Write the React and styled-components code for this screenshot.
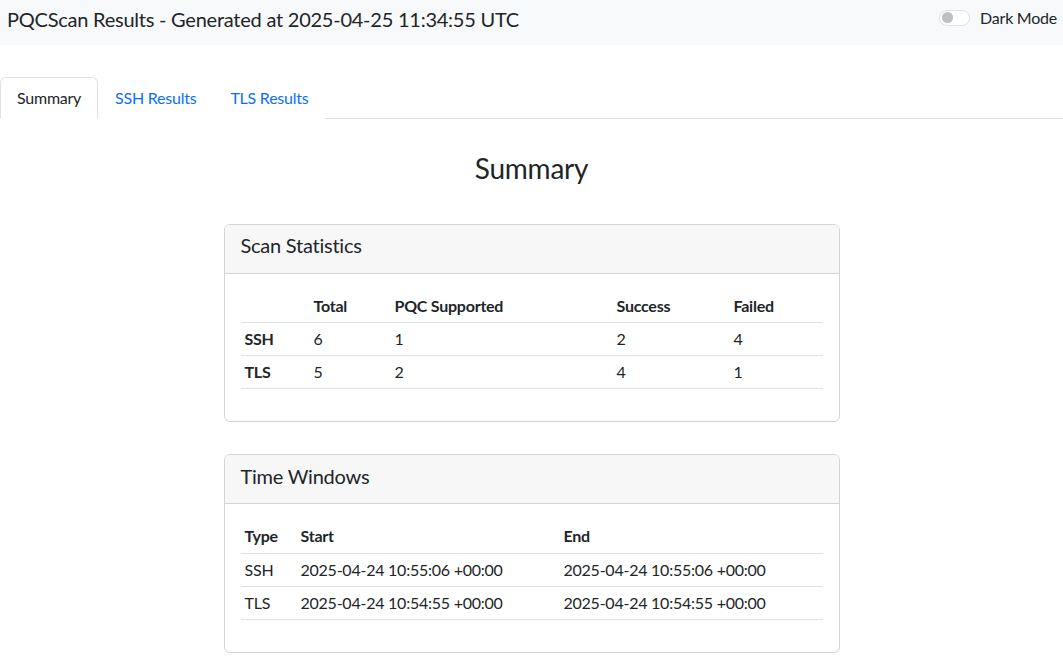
import { useState } from 'react';
import styled, { createGlobalStyle } from 'styled-components';

const GlobalStyle = createGlobalStyle`
  * { box-sizing: border-box; }
  body {
    margin: 0;
    font-family: Lato, "Open Sans", sans-serif;
    font-size: 16px;
    line-height: 1.5;
    letter-spacing: -0.015em;
    color: #212529;
    background: #fff;
  }
`;

const TopBar = styled.header`
  height: 45px;
  background: #f8f9fa;
  display: flex;
  align-items: center;
  justify-content: space-between;
  padding: 0 6px 0 7px;
`;

const Title = styled.h1`
  margin: 0;
  font-size: 20px;
  font-weight: 400;
  line-height: 1.2;
  margin-top: -8px;
`;

const ThemeToggle = styled.label`
  display: flex;
  align-items: center;
  gap: 10px;
  margin-top: -10px;
  cursor: pointer;
`;

const Switch = styled.span`
  width: 31px;
  height: 16px;
  border-radius: 8px;
  border: 1px solid #dee2e6;
  background: ${p => (p.on ? '#0d6efd' : '#fff')};
  display: flex;
  align-items: center;
  justify-content: ${p => (p.on ? 'flex-end' : 'flex-start')};
  padding: 0 2px;

  &::after {
    content: '';
    width: 11px;
    height: 11px;
    border-radius: 50%;
    background: ${p => (p.on ? '#fff' : '#bfbfbf')};
  }
`;

const Tabs = styled.nav`
  display: flex;
  margin-top: 32px;
  border-bottom: 1px solid #dee2e6;
`;

const Tab = styled.button`
  font: inherit;
  letter-spacing: inherit;
  background: #fff;
  padding: 8px 16px;
  margin-bottom: -1px;
  border: 1px solid ${p => (p.active ? '#dee2e6' : 'transparent')};
  border-bottom-color: ${p => (p.active ? '#fff' : 'transparent')};
  border-radius: 6px 6px 0 0;
  color: ${p => (p.active ? '#212529' : '#0d6efd')};
  cursor: pointer;
  line-height: 24px;
`;

const Content = styled.main`
  display: flex;
  flex-direction: column;
  align-items: center;
  padding-top: 33px;
`;

const Heading = styled.h2`
  margin: 0 0 38px;
  font-size: 28px;
  font-weight: 400;
  line-height: 1.2;
`;

const Card = styled.section`
  width: 616px;
  border: 1px solid #d4d4d4;
  border-radius: 6px;
  margin-bottom: 32px;
  overflow: hidden;
`;

const CardHeader = styled.div`
  background: #f7f7f7;
  border-bottom: 1px solid #d4d4d4;
  padding: 8px 16px;
  height: 49px;
  display: flex;
  align-items: center;
`;

const CardTitle = styled.h3`
  margin: 0;
  font-size: 20px;
  font-weight: 400;
  line-height: 1.2;
  margin-top: -7px;
`;

const CardBody = styled.div`
  padding: 16px 16px 32px;
`;

const Table = styled.table`
  width: 100%;
  border-collapse: collapse;
  table-layout: fixed;
`;

const Cell = styled.td`
  padding: 4px;
  height: 33px;
  border-bottom: 1px solid #dee2e6;
  font-weight: ${p => (p.bold ? 700 : 400)};
  text-align: left;
  vertical-align: middle;
`;

const HeadCell = styled(Cell).attrs({ as: 'th' })`
  font-weight: 700;
`;

const stats = [
  { type: 'SSH', total: 6, pqc: 1, success: 2, failed: 4 },
  { type: 'TLS', total: 5, pqc: 2, success: 4, failed: 1 },
];

const windows = [
  { type: 'SSH', start: '2025-04-24 10:55:06 +00:00', end: '2025-04-24 10:55:06 +00:00' },
  { type: 'TLS', start: '2025-04-24 10:54:55 +00:00', end: '2025-04-24 10:54:55 +00:00' },
];

const App = () => {
  const [dark, setDark] = useState(false);
  const [tab, setTab] = useState('summary');

  const tabs = [
    { id: 'summary', label: 'Summary' },
    { id: 'ssh', label: 'SSH Results' },
    { id: 'tls', label: 'TLS Results' },
  ];

  return (
    <>
      <GlobalStyle />
      <TopBar>
        <Title>PQCScan Results - Generated at 2025-04-25 11:34:55 UTC</Title>
        <ThemeToggle onClick={() => setDark(!dark)}>
          <Switch on={dark ? 1 : 0} />
          Dark Mode
        </ThemeToggle>
      </TopBar>

      <Tabs>
        {tabs.map(t => (
          <Tab key={t.id} active={tab === t.id ? 1 : 0} onClick={() => setTab(t.id)}>
            {t.label}
          </Tab>
        ))}
      </Tabs>

      <Content>
        <Heading>Summary</Heading>

        <Card>
          <CardHeader>
            <CardTitle>Scan Statistics</CardTitle>
          </CardHeader>
          <CardBody>
            <Table>
              <colgroup>
                <col style={{ width: 69 }} />
                <col style={{ width: 81 }} />
                <col style={{ width: 222 }} />
                <col style={{ width: 117 }} />
                <col />
              </colgroup>
              <thead>
                <tr>
                  <HeadCell />
                  <HeadCell>Total</HeadCell>
                  <HeadCell>PQC Supported</HeadCell>
                  <HeadCell>Success</HeadCell>
                  <HeadCell>Failed</HeadCell>
                </tr>
              </thead>
              <tbody>
                {stats.map(s => (
                  <tr key={s.type}>
                    <Cell bold={1}>{s.type}</Cell>
                    <Cell>{s.total}</Cell>
                    <Cell>{s.pqc}</Cell>
                    <Cell>{s.success}</Cell>
                    <Cell>{s.failed}</Cell>
                  </tr>
                ))}
              </tbody>
            </Table>
          </CardBody>
        </Card>

        <Card>
          <CardHeader>
            <CardTitle>Time Windows</CardTitle>
          </CardHeader>
          <CardBody>
            <Table>
              <colgroup>
                <col style={{ width: 56 }} />
                <col style={{ width: 263 }} />
                <col />
              </colgroup>
              <thead>
                <tr>
                  <HeadCell>Type</HeadCell>
                  <HeadCell>Start</HeadCell>
                  <HeadCell>End</HeadCell>
                </tr>
              </thead>
              <tbody>
                {windows.map(w => (
                  <tr key={w.type}>
                    <Cell>{w.type}</Cell>
                    <Cell>{w.start}</Cell>
                    <Cell>{w.end}</Cell>
                  </tr>
                ))}
              </tbody>
            </Table>
          </CardBody>
        </Card>
      </Content>
    </>
  );
};

export default App;
